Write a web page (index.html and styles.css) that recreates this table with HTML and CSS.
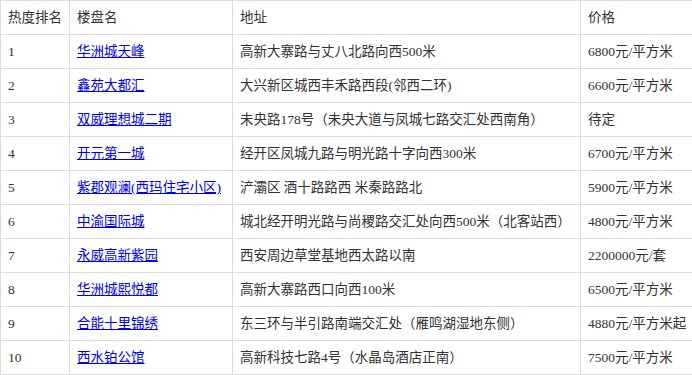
FILE: index.html
```html
<!DOCTYPE html>
<html lang="zh-CN">
<head>
<meta charset="utf-8">
<title>热度排名</title>
<link rel="stylesheet" href="styles.css">
</head>
<body>
<table class="rank">
  <colgroup>
    <col class="c-rank"><col class="c-name"><col class="c-addr"><col class="c-price">
  </colgroup>
  <thead>
    <tr><th>热度排名</th><th>楼盘名</th><th>地址</th><th>价格</th></tr>
  </thead>
  <tbody>
    <tr><td>1</td><td><a href="#">华洲城天峰</a></td><td>高新大寨路与丈八北路向西500米</td><td>6800元/平方米</td></tr>
    <tr><td>2</td><td><a href="#">鑫苑大都汇</a></td><td>大兴新区城西丰禾路西段(邻西二环)</td><td>6600元/平方米</td></tr>
    <tr><td>3</td><td><a href="#">双威理想城二期</a></td><td>未央路178号（未央大道与凤城七路交汇处西南角）</td><td>待定</td></tr>
    <tr><td>4</td><td><a href="#">开元第一城</a></td><td>经开区凤城九路与明光路十字向西300米</td><td>6700元/平方米</td></tr>
    <tr><td>5</td><td><a href="#">紫郡观澜(西玛住宅小区)</a></td><td>浐灞区 酒十路路西 米秦路路北</td><td>5900元/平方米</td></tr>
    <tr><td>6</td><td><a href="#">中渝国际城</a></td><td>城北经开明光路与尚稷路交汇处向西500米（北客站西）</td><td>4800元/平方米</td></tr>
    <tr><td>7</td><td><a href="#">永威高新紫园</a></td><td>西安周边草堂基地西太路以南</td><td>2200000元/套</td></tr>
    <tr><td>8</td><td><a href="#">华洲城熙悦都</a></td><td>高新大寨路西口向西100米</td><td>6500元/平方米</td></tr>
    <tr><td>9</td><td><a href="#">合能十里锦绣</a></td><td>东三环与半引路南端交汇处（雁鸣湖湿地东侧）</td><td>4880元/平方米起</td></tr>
    <tr><td>10</td><td><a href="#">西水铂公馆</a></td><td>高新科技七路4号（水晶岛酒店正南）</td><td>7500元/平方米</td></tr>
  </tbody>
</table>
</body>
</html>
```
FILE: styles.css
```css
html, body {
  margin: 0;
  padding: 0;
  background: #fff;
}
body {
  font-family: "Liberation Serif", "Noto Sans CJK SC", serif;
  font-size: 13.5px;
  color: #333;
  text-spacing-trim: space-all;
}
.rank {
  width: 692px;
  border-collapse: collapse;
  table-layout: fixed;
}
.c-rank { width: 69px; }
.c-name { width: 163px; }
.c-addr { width: 348px; }
.c-price { width: 112px; }
.rank th,
.rank td {
  border: 1px solid #ddd;
  padding: 7px 7px;
  line-height: 19px;
  text-align: left;
  font-weight: normal;
  white-space: nowrap;
  overflow: hidden;
  vertical-align: middle;
}
.rank a {
  color: #00e;
  text-decoration: underline;
}
```
